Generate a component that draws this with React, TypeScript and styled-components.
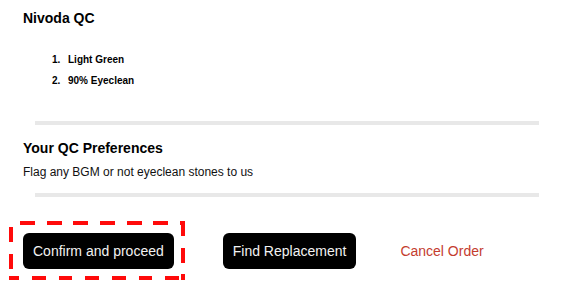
import React from "react";
import styled, { createGlobalStyle } from "styled-components";

const GlobalStyle = createGlobalStyle`
  body {
    margin: 0;
    background: #fff;
    font-family: "Liberation Sans", Arial, sans-serif;
    color: #000;
  }
`;

const Page = styled.div`
  display: flex;
  flex-direction: column;
  padding-top: 10px;
  width: 585px;
`;

const Section = styled.section<{ $top?: number }>`
  display: flex;
  flex-direction: column;
  margin-top: ${(p) => p.$top ?? 0}px;
  padding-left: 23px;
`;

const Heading = styled.h2`
  margin: 0;
  font-size: 14px;
  line-height: 16px;
  font-weight: bold;
`;

const Checklist = styled.ol`
  margin: 28px 0 0 0;
  padding: 0 0 0 29px;
  list-style: none;
  counter-reset: qc;
  display: flex;
  flex-direction: column;
  gap: 9px;
  font-size: 10px;
  line-height: 12px;
  font-weight: bold;

  li {
    display: flex;
    counter-increment: qc;
  }

  li::before {
    content: counter(qc) ".";
    width: 16px;
  }
`;

const Note = styled.p`
  margin: 9px 0 0 0;
  font-size: 12px;
  line-height: 14px;
  color: #111;
`;

const Divider = styled.div<{ $top: number }>`
  margin: ${(p) => p.$top}px 0 0 35px;
  width: 504px;
  height: 4px;
  background: #e8e8e8;
`;

const Actions = styled.div`
  display: flex;
  align-items: center;
  margin-top: 24px;
  padding-left: 9px;
`;

const dashRed = "#ff0a0a";

// long dashes like the reference, drawn per edge so the phase can be matched
const Highlight = styled.div`
  display: flex;
  padding: 12px 11px 11px 14px;
  background:
    repeating-linear-gradient(90deg, transparent 0 11px, ${dashRed} 11px 26px, transparent 26px 26.67px) top left / 100% 4px no-repeat,
    repeating-linear-gradient(90deg, ${dashRed} 0 10px, transparent 10px 23px, ${dashRed} 23px 26.67px) bottom left / 100% 4px no-repeat,
    repeating-linear-gradient(180deg, transparent 0 6px, ${dashRed} 6px 21px, transparent 21px 26.67px) top left / 4px 100% no-repeat,
    repeating-linear-gradient(180deg, ${dashRed} 0 15px, transparent 15px 26.67px) top right / 4px 100% no-repeat;
`;

const DarkButton = styled.button<{ $left?: number }>`
  margin-left: ${(p) => p.$left ?? 0}px;
  height: 36px;
  padding: 0 10px;
  border: none;
  border-radius: 6px;
  background: #000;
  color: #f2f2f2;
  font-family: "Liberation Sans", Arial, sans-serif;
  font-size: 14px;
  cursor: pointer;
  white-space: nowrap;
`;

const TextButton = styled.button`
  margin-left: 44px;
  padding: 0;
  border: none;
  background: none;
  color: #c43d2f;
  font-family: "Liberation Sans", Arial, sans-serif;
  font-size: 14px;
  cursor: pointer;
`;

const App: React.FC = () => {
  return (
    <>
      <GlobalStyle />
      <Page>
        <Section>
          <Heading>Nivoda QC</Heading>
          <Checklist>
            <li>Light Green</li>
            <li>90% Eyeclean</li>
          </Checklist>
        </Section>
        <Divider $top={34} />
        <Section $top={15}>
          <Heading>Your QC Preferences</Heading>
          <Note>Flag any BGM or not eyeclean stones to us</Note>
        </Section>
        <Divider $top={14} />
        <Actions>
          <Highlight>
            <DarkButton>Confirm and proceed</DarkButton>
          </Highlight>
          <DarkButton $left={38}>Find Replacement</DarkButton>
          <TextButton>Cancel Order</TextButton>
        </Actions>
      </Page>
    </>
  );
};

export default App;
